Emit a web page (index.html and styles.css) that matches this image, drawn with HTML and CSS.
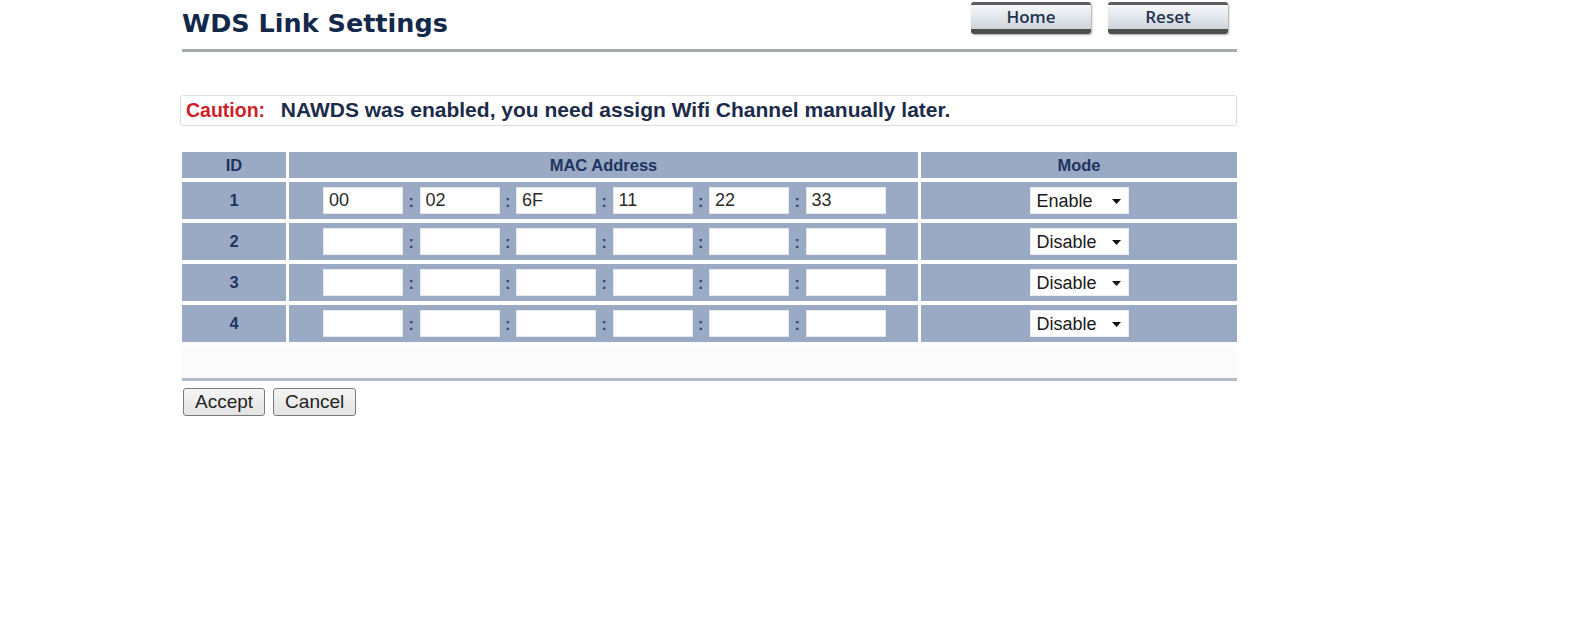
FILE: index.html
```html
<!DOCTYPE html>
<html lang="en">
    <head>
        <meta charset="UTF-8">
        <title>WDS Link Settings</title>
        <link rel="stylesheet" href="styles.css">
    </head>
    <body>
        <div class="page">
            <div class="header">
                <h1 class="page-title">WDS Link Settings</h1>
                <div class="nav-buttons">
                    <a class="nav-btn" href="#">Home</a>
                    <a class="nav-btn" href="#">Reset</a>
                </div>
            </div>
            <div class="caution">
                <span class="caution-label">Caution:</span>&nbsp; NAWDS was enabled, you need assign Wifi Channel manually later.
            </div>
            <table class="wds-table">
                <colgroup>
                    <col class="col-id">
                    <col class="col-mac">
                    <col class="col-mode">
                </colgroup>
                <thead>
                    <tr>
                        <th>ID</th>
                        <th>MAC Address</th>
                        <th>Mode</th>
                    </tr>
                </thead>
                <tbody>
                    <tr>
                        <td class="id-cell">1</td>
                        <td class="mac-cell">
                            <div class="mac">
                                <input class="mac-part" type="text" value="00"><span class="colon">:</span>
                                <input class="mac-part" type="text" value="02"><span class="colon">:</span>
                                <input class="mac-part" type="text" value="6F"><span class="colon">:</span>
                                <input class="mac-part" type="text" value="11"><span class="colon">:</span>
                                <input class="mac-part" type="text" value="22"><span class="colon">:</span>
                                <input class="mac-part" type="text" value="33">
                            </div>
                        </td>
                        <td class="mode-cell">
                            <span class="select-wrap">
                                <select class="mode-select"><option selected>Enable</option><option>Disable</option></select>
                                <svg class="arrow" width="9" height="5" viewBox="0 0 9 5"><path d="M0 0h9L4.5 5z" fill="#111"/></svg>
                            </span>
                        </td>
                    </tr>
                    <tr>
                        <td class="id-cell">2</td>
                        <td class="mac-cell">
                            <div class="mac">
                                <input class="mac-part" type="text"><span class="colon">:</span>
                                <input class="mac-part" type="text"><span class="colon">:</span>
                                <input class="mac-part" type="text"><span class="colon">:</span>
                                <input class="mac-part" type="text"><span class="colon">:</span>
                                <input class="mac-part" type="text"><span class="colon">:</span>
                                <input class="mac-part" type="text">
                            </div>
                        </td>
                        <td class="mode-cell">
                            <span class="select-wrap">
                                <select class="mode-select"><option>Enable</option><option selected>Disable</option></select>
                                <svg class="arrow" width="9" height="5" viewBox="0 0 9 5"><path d="M0 0h9L4.5 5z" fill="#111"/></svg>
                            </span>
                        </td>
                    </tr>
                    <tr>
                        <td class="id-cell">3</td>
                        <td class="mac-cell">
                            <div class="mac">
                                <input class="mac-part" type="text"><span class="colon">:</span>
                                <input class="mac-part" type="text"><span class="colon">:</span>
                                <input class="mac-part" type="text"><span class="colon">:</span>
                                <input class="mac-part" type="text"><span class="colon">:</span>
                                <input class="mac-part" type="text"><span class="colon">:</span>
                                <input class="mac-part" type="text">
                            </div>
                        </td>
                        <td class="mode-cell">
                            <span class="select-wrap">
                                <select class="mode-select"><option>Enable</option><option selected>Disable</option></select>
                                <svg class="arrow" width="9" height="5" viewBox="0 0 9 5"><path d="M0 0h9L4.5 5z" fill="#111"/></svg>
                            </span>
                        </td>
                    </tr>
                    <tr>
                        <td class="id-cell">4</td>
                        <td class="mac-cell">
                            <div class="mac">
                                <input class="mac-part" type="text"><span class="colon">:</span>
                                <input class="mac-part" type="text"><span class="colon">:</span>
                                <input class="mac-part" type="text"><span class="colon">:</span>
                                <input class="mac-part" type="text"><span class="colon">:</span>
                                <input class="mac-part" type="text"><span class="colon">:</span>
                                <input class="mac-part" type="text">
                            </div>
                        </td>
                        <td class="mode-cell">
                            <span class="select-wrap">
                                <select class="mode-select"><option>Enable</option><option selected>Disable</option></select>
                                <svg class="arrow" width="9" height="5" viewBox="0 0 9 5"><path d="M0 0h9L4.5 5z" fill="#111"/></svg>
                            </span>
                        </td>
                    </tr>
                </tbody>
            </table>
            <div class="table-footer"></div>
            <div class="actions">
                <button class="form-btn" type="button">Accept</button>
                <button class="form-btn" type="button">Cancel</button>
            </div>
        </div>
    </body>
</html>
```

FILE: styles.css
```css
html, body {
    margin: 0;
    padding: 0;
    background: #fff;
}

body {
    font-family: "Liberation Sans", Arial, sans-serif;
    color: #1a2a48;
}

.page {
    width: 1055px;
    margin-left: 182px;
}

/* title + Home / Reset */
.header {
    display: flex;
    justify-content: space-between;
    align-items: flex-start;
    height: 49px;
    border-bottom: 3px solid #a4acad;
}

.page-title {
    margin: 0;
    padding-top: 8px;
    font-family: "DejaVu Sans", Verdana, sans-serif;
    font-size: 25.5px;
    line-height: 30px;
    font-weight: bold;
    color: #14284b;
}

.nav-buttons {
    display: flex;
    gap: 17px;
    padding-top: 2px;
    padding-right: 9px;
}

.nav-btn {
    display: block;
    width: 120px;
    height: 24px;
    line-height: 24px;
    text-align: center;
    text-decoration: none;
    font-family: "Open Sans", "DejaVu Sans", sans-serif;
    font-size: 17px;
    font-weight: 600;
    color: #22334f;
    background: linear-gradient(#f6f7f9, #dfe3e9 60%, #cdd2da);
    border-top: 3px solid #5c5c5c;
    border-bottom: 5px solid #4e4e4e;
    border-radius: 3px;
    box-shadow: 1px 1px 2px rgba(0, 0, 0, 0.35);
}

/* caution message */
.caution {
    margin-top: 43px;
    margin-left: -2px;
    width: 1057px;
    box-sizing: border-box;
    height: 31px;
    padding: 0 5px 2px;
    line-height: 27px;
    border: 1px solid #dcdde0;
    border-radius: 3px;
    font-size: 21px;
    font-weight: bold;
    color: #1c2b4a;
    white-space: nowrap;
}

.caution-label {
    font-size: 19.5px;
    color: #cf1f2b;
    margin-right: 4px;
}

/* WDS table */
.wds-table {
    margin-top: 22px;
    margin-left: -3px;
    width: 1061px;
    table-layout: fixed;
    border-collapse: separate;
    border-spacing: 3px 4px;
}

.col-id { width: 104px; }
.col-mac { width: 629px; }
.col-mode { width: 316px; }

.wds-table th,
.wds-table td {
    background: #9aaac4;
    padding: 0;
    color: #1e3461;
}

.wds-table th {
    height: 26px;
    font-size: 16.5px;
    font-weight: bold;
    text-align: center;
}

.wds-table td {
    height: 37px;
}

.id-cell {
    text-align: center;
    font-size: 16.5px;
    font-weight: bold;
}

.mac-cell {
    padding-left: 34px !important;
}

.mac {
    display: flex;
    align-items: center;
}

.mac-part {
    width: 80px;
    height: 27px;
    box-sizing: border-box;
    border: 1px solid #e6e8ec;
    padding: 0 5px;
    margin: 0;
    background: #fff;
    font-family: "Liberation Sans", Arial, sans-serif;
    font-size: 18px;
    color: #2b2b2b;
    outline: none;
}

.colon {
    width: 16.5px;
    text-align: center;
    font-size: 16px;
    font-weight: bold;
    color: #34476e;
    padding-top: 2px;
}

.mode-cell {
    text-align: center;
}

.select-wrap {
    position: relative;
    display: inline-block;
    vertical-align: middle;
}

.mode-select {
    appearance: none;
    -webkit-appearance: none;
    width: 99px;
    height: 27px;
    margin: 0;
    border: 1px solid #eceef2;
    border-radius: 0;
    padding: 0 0 0 6px;
    background: #fff;
    font-family: "Liberation Sans", Arial, sans-serif;
    font-size: 18px;
    color: #1a1a1a;
    display: block;
}

.arrow {
    position: absolute;
    right: 8px;
    top: 12px;
    pointer-events: none;
}

.table-footer {
    height: 32px;
    background: #fbfbfb;
    border-bottom: 3px solid #b2bccb;
}

/* Accept / Cancel */
.actions {
    display: flex;
    gap: 8px;
    margin-top: 7px;
    padding-left: 1px;
}

.form-btn {
    height: 28px;
    padding: 0 11px;
    font-family: "Liberation Sans", Arial, sans-serif;
    font-size: 19px;
    color: #222;
    background: linear-gradient(#f5f5f5, #e2e2e2);
    border: 1px solid #7a7a7a;
    border-radius: 3px;
}
```
